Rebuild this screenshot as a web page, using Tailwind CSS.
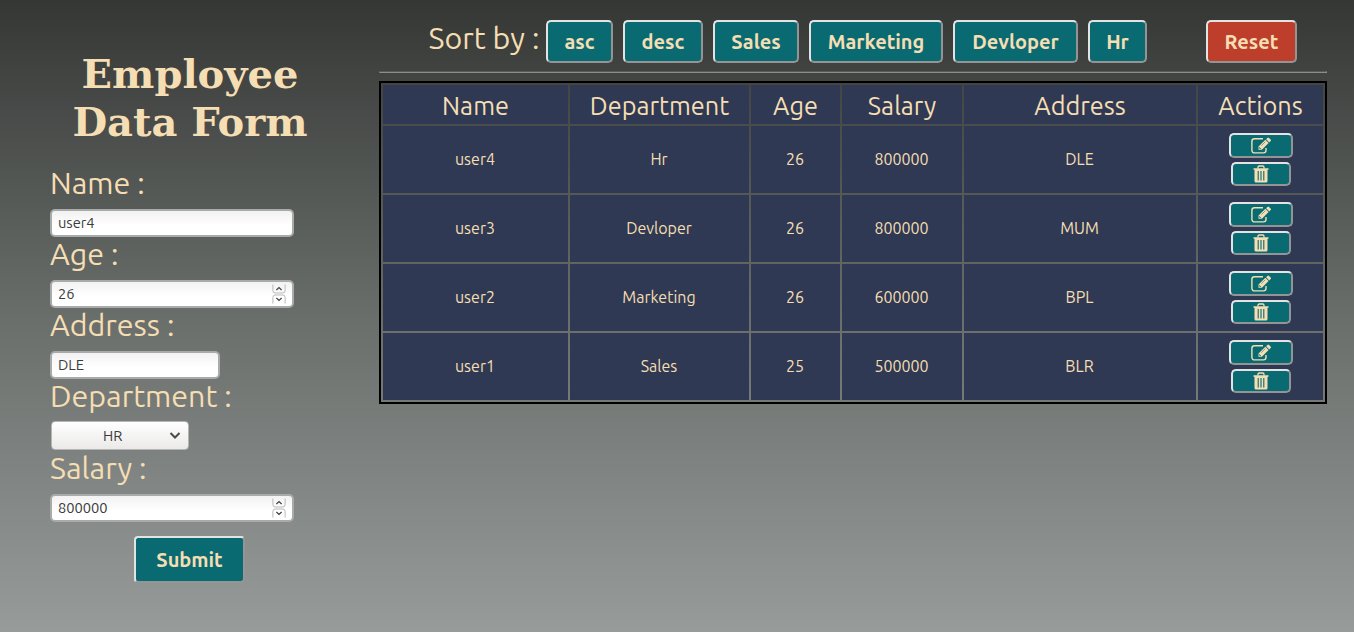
<!DOCTYPE html>
<html lang="en">
<head>
<meta charset="utf-8">
<title>Employee Data Form</title>
<script src="https://cdn.jsdelivr.net/npm/@tailwindcss/browser@4"></script>
</head>
<body class="flex h-[632px] w-[1354px] overflow-hidden bg-linear-to-b/srgb from-[#353735] via-[#696e6b] to-[#979c9b] font-['Ubuntu','Noto_Sans',sans-serif] text-[#f5deb3]">
<svg class="hidden">
  <symbol id="edit" viewBox="0 0 20 18"><path d="M12 1.800H3.500a2.600 2.600 0 0 0-2.600 2.600v8.900a2.600 2.600 0 0 0 2.600 2.600h8.900a2.600 2.600 0 0 0 2.600-2.600v-2.300" fill="none" stroke="currentColor" stroke-width="1.400"/><path d="M16.400.9q.8-.8 1.600 0l1.600 1.600q.8.800 0 1.600l-1.300 1.300-3.200-3.200zM14.400 2.800l3.200 3.200-6.700 6.700H7.500V9.500z" fill="currentColor"/><path d="M9 10.200v1h1v.8l-.9.100-1-1 .1-.9z" fill="#096a72"/><path d="M14.300 4.700l-4 4" stroke="#096a72" stroke-width=".5"/></symbol>
  <symbol id="trash" viewBox="0 0 16 18"><path d="M5 3.500V2.300Q5 1 6.200 1h3.600Q11 1 11 2.300v1.200" fill="none" stroke="currentColor" stroke-width="1.300"/><path d="M.5 3.200h15v1.500H14.500V16q0 1.500-1.500 1.500H3Q1.500 17.500 1.500 16V4.700H.5z" fill="currentColor"/><path d="M5.200 6v9.500M8 6v9.500M10.800 6v9.500" stroke="#096a72" stroke-width="1.100"/></symbol>
  <symbol id="spin" viewBox="0 0 14 20"><path d="M.9.500v6Q.9 9 3 9h8q2.100 0 2.100-2.500v-6M.9 19.500v-6Q.9 11 3 11h8q2.100 0 2.100 2.500v6" fill="none" stroke="#b9b9b9"/><path d="M4.400 6 7 3.600 9.600 6M4.400 14 7 16.400 9.600 14" fill="none" stroke="#444" stroke-width="1.300"/></symbol>
</svg>

<aside class="w-[379px] shrink-0 pl-[50px] pt-[50px]">
  <h1 class="w-[280px] text-center font-['DejaVu_Serif',serif] text-[40px] font-bold leading-[48px]">Employee<br>Data Form</h1>
  <form class="mt-[16px] text-[14.667px] text-[#3b3b3b]">
    <label class="block h-[47px] text-[30.400px] leading-[43px] text-[#f5deb3]">Name :</label>
    <div class="flex h-[28px] w-[244px] items-center rounded-[5px] border-2 border-[#a9abaa] bg-linear-to-b from-[#f2f2f2] to-white to-60% px-[6px]"><span>user4</span></div>
    <label class="block h-[43px] text-[30.400px] leading-[35px] text-[#f5deb3]">Age :</label>
    <div class="flex h-[28px] w-[244px] items-center justify-between rounded-[5px] border-2 border-[#a9abaa] bg-linear-to-b from-[#f2f2f2] to-white to-60% px-[6px]"><span>26</span><svg class="h-5 w-3.5"><use href="#spin"/></svg></div>
    <label class="block h-[43px] text-[30.400px] leading-[35px] text-[#f5deb3]">Address :</label>
    <div class="flex h-[28px] w-[170px] items-center rounded-[5px] border-2 border-[#a9abaa] bg-linear-to-b from-[#f2f2f2] to-white to-60% px-[6px]"><span>DLE</span></div>
    <label class="block h-[42px] text-[30.400px] leading-[35px] text-[#f5deb3]">Department :</label>
    <div class="ml-px flex h-[29px] w-[138px] items-center justify-between rounded-[4px] border border-[#b5b5b5] bg-linear-to-b from-white to-[#ebeae9] pl-[51px] pr-[7px]"><span>HR</span><svg class="h-3 w-3" viewBox="0 0 12 12" fill="none" stroke="#4a4a4a" stroke-width="2"><path d="M1.500 3 6 7.500 10.500 3"/></svg></div>
    <label class="block h-[44px] text-[30.400px] leading-[37px] text-[#f5deb3]">Salary :</label>
    <div class="flex h-[28px] w-[244px] items-center justify-between rounded-[5px] border-2 border-[#a9abaa] bg-linear-to-b from-[#f2f2f2] to-white to-60% px-[6px]"><span>800000</span><svg class="h-5 w-3.5"><use href="#spin"/></svg></div>
    <button type="button" class="ml-[84px] mt-[14px] block h-[47px] w-[111px] rounded-[4px] border-2 border-b-[#949696] border-l-[#e3e3e3] border-r-[#949696] border-t-[#e3e3e3] bg-[#096a72] text-[20px] font-bold text-[#f5deb3]">Submit</button>
  </form>
</aside>

<main class="w-[948px] shrink-0 pt-[20px]">
  <div class="flex h-[51px] items-start pl-[49.500px] text-[20px] font-bold">
    <span class="w-[117.500px] whitespace-nowrap text-[30.400px] font-normal leading-[37px]">Sort by :</span>
    <div class="flex gap-[10px] *:h-[43px] *:rounded-[5px] *:border-2 *:border-b-[#949494] *:border-l-[#e3e3e3] *:border-r-[#949494] *:border-t-[#e3e3e3] *:bg-[#096a72]">
      <button class="w-[67px]">asc</button><button class="w-[80px]">desc</button><button class="w-[86px]">Sales</button><button class="w-[134px]">Marketing</button><button class="w-[125px]">Devloper</button><button class="w-[59px]">Hr</button>
    </div>
    <button class="ml-[59px] h-[43px] w-[91px] rounded-[5px] border-2 border-b-[#949494] border-l-[#e3e3e3] border-r-[#949494] border-t-[#e3e3e3] bg-[#bd3e2b]">Reset</button>
  </div>
  <hr class="mb-[8px] h-[2px] border border-b-[#8d8d8d] border-l-[#5a5a5a] border-r-[#8d8d8d] border-t-[#5a5a5a]">
  <table class="w-[948px] table-fixed border-separate border-spacing-[2px] border-2 border-black text-center text-[16px] [&_td]:h-[67px] [&_td]:bg-[#2f3953] [&_td]:p-0 [&_th]:h-[39px] [&_th]:bg-[#2f3953] [&_th]:px-0 [&_th]:pb-0 [&_th]:pt-[2px] [&_th]:text-[25.300px] [&_th]:font-normal [&_th]:leading-[37px]">
    <colgroup><col class="w-[185px]"><col class="w-[179px]"><col class="w-[89px]"><col class="w-[120px]"><col class="w-[232px]"><col class="w-[125px]"></colgroup>
    <thead><tr><th>Name</th><th>Department</th><th>Age</th><th>Salary</th><th>Address</th><th>Actions</th></tr></thead>
    <tbody id="rows"></tbody>
  </table>
</main>
<template id="actions"><div class="flex flex-col items-center gap-1 *:flex *:items-center *:justify-center *:rounded-[5px] *:border-2 *:border-b-[#949494] *:border-l-[#e3e3e3] *:border-r-[#949494] *:border-t-[#e3e3e3] *:bg-[#096a72]"><button class="h-[25px] w-[64px]"><svg class="h-[18px] w-[20px]"><use href="#edit"/></svg></button><button class="h-[24px] w-[60px]"><svg class="h-[18px] w-[16px]"><use href="#trash"/></svg></button></div></template>
<script>
const employees = [
  ["user4", "Hr", "26", "800000", "DLE"],
  ["user3", "Devloper", "26", "800000", "MUM"],
  ["user2", "Marketing", "26", "600000", "BPL"],
  ["user1", "Sales", "25", "500000", "BLR"]
];
const actions = document.getElementById("actions").innerHTML;
document.getElementById("rows").innerHTML = employees.map(e =>
  "<tr>" + e.map(v => '<td><span class="block pb-[2px] pr-px">' + v + "</span></td>").join("") + "<td>" + actions + "</td></tr>").join("");
</script>
</body>
</html>
